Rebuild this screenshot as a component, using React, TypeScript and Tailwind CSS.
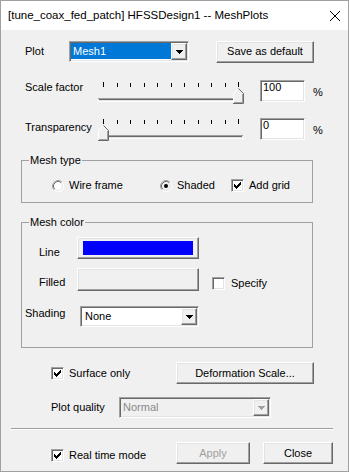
import React from "react";

const raised =
  "border border-t-white border-l-white border-r-[#696969] border-b-[#696969] shadow-[inset_-1px_-1px_0_#a0a0a0,inset_1px_1px_0_#e3e3e3]";
const sunken =
  "border border-t-[#a0a0a0] border-l-[#a0a0a0] border-r-white border-b-white shadow-[inset_1px_1px_0_#696969,inset_-1px_-1px_0_#e3e3e3]";

const Triangle = ({ color = "#000" }: { color?: string }) => (
  <svg width="7" height="4" viewBox="0 0 7 4">
    <path d="M0 0h7v1H0zM1 1h5v1H1zM2 2h3v1H2zM3 3h1v1H3z" fill={color} />
  </svg>
);

interface ComboProps {
  value: string;
  width: string;
  selected?: boolean;
  disabled?: boolean;
}

const Combo = ({ value, width, selected, disabled }: ComboProps) => (
  <div className={`${width} h-[21px] flex p-[1px] ${sunken} ${disabled ? "bg-[#f0f0f0]" : "bg-white"}`}>
    <div
      className={`flex-1 flex items-center leading-[13px] ${
        selected ? "bg-[#0078d7] text-white pl-[2px] mb-[1px]" : disabled ? "text-[#8a8a8a] pl-[2px]" : "pl-[3px]"
      }`}
    >
      {value}
    </div>
    <div className={`w-[16px] flex items-center justify-center bg-[#f0f0f0] ${raised}`}>
      <Triangle color={disabled ? "#a0a0a0" : "#000"} />
    </div>
  </div>
);

const Checkbox = ({ checked }: { checked?: boolean }) => (
  <div className={`w-[13px] h-[13px] shrink-0 bg-white flex items-center justify-center ${sunken}`}>
    {checked && (
      <svg width="7" height="7" viewBox="0 0 7 7">
        <path
          d="M6 0h1v1H6zM5 1h2v1H5zM0 2h1v1H0zM4 2h3v1H4zM0 3h2v1H0zM3 3h3v1H3zM0 4h5v1H0zM1 5h3v1H1zM2 6h1v1H2z"
          fill="#000"
        />
      </svg>
    )}
  </div>
);

const Radio = ({ checked }: { checked?: boolean }) => (
  <svg width="12" height="12" viewBox="0 0 12 12" className="shrink-0">
    <circle cx="6" cy="6" r="5.5" fill={checked ? "#f0f0f0" : "#fff"} />
    <path d="M2.11 9.89A5.5 5.5 0 0 1 9.89 2.11" stroke="#a0a0a0" fill="none" />
    <path d="M9.89 2.11A5.5 5.5 0 0 1 2.11 9.89" stroke="#fff" fill="none" />
    <path d="M2.82 9.18A4.5 4.5 0 0 1 9.18 2.82" stroke="#696969" fill="none" />
    <path d="M9.18 2.82A4.5 4.5 0 0 1 2.82 9.18" stroke="#e3e3e3" fill="none" />
    {checked && <circle cx="6" cy="6" r="2" fill="#000" />}
  </svg>
);

const Slider = ({ pos }: { pos: number }) => {
  const ticks = Array.from({ length: 11 }, (_, i) => Math.round(5 + i * 13.5) + 0.5);
  return (
    <svg width="146" height="23" viewBox="0 0 146 23" className="shrink-0">
      {ticks.map((x, i) => (
        <line key={i} x1={x} x2={x} y1={i === 0 || i === 10 ? 0 : 1} y2={5} stroke="#000" />
      ))}
      <line x1="0" y1="16.5" x2="145" y2="16.5" stroke="#a0a0a0" />
      <line x1="1" y1="17.5" x2="144" y2="17.5" stroke="#696969" />
      <line x1="1" y1="18.5" x2="145" y2="18.5" stroke="#e3e3e3" />
      <line x1="0" y1="19.5" x2="146" y2="19.5" stroke="#fff" />
      <g transform={`translate(${pos},6)`}>
        <polygon points="0,5 5,0 11,6 11,16 0,16" fill="#f0f0f0" />
        <polyline points="0.5,15 0.5,5.5 5.5,0.5" stroke="#fff" fill="none" />
        <polyline points="5.5,0.5 10.5,5.5 10.5,15.5 0,15.5" stroke="#696969" fill="none" />
        <polyline points="9.5,6 9.5,14.5 1,14.5" stroke="#a0a0a0" fill="none" />
      </g>
    </svg>
  );
};

const Button = ({ label, width, disabled }: { label: string; width: string; disabled?: boolean }) => (
  <div
    className={`${width} h-[22px] flex items-center justify-center bg-[#f0f0f0] ${raised} ${
      disabled ? "text-[#a0a0a0]" : ""
    }`}
  >
    {label}
  </div>
);

export default function App() {
  return (
    <div className="w-[349px] h-[472px] border border-[#a0a0a0] bg-[#f0f0f0] flex flex-col text-[11px] leading-[13px] text-black font-['Liberation_Sans',Arial,sans-serif]">
      {/* title bar */}
      <div className="h-[29px] bg-white flex items-center justify-between pl-[7px] pr-[8px] shrink-0">
        <span className="text-[11.5px]">[tune_coax_fed_patch] HFSSDesign1 -- MeshPlots</span>
        <svg width="10" height="10" viewBox="0 0 10 10">
          <path d="M0 0L10 10M10 0L0 10" stroke="#000" strokeWidth="1" />
        </svg>
      </div>

      {/* plot */}
      <div className="mt-[11px] flex items-center h-[21px]">
        <div className="ml-[24px] w-[44px]">Plot</div>
        <Combo value="Mesh1" width="w-[120px]" selected />
        <div className="ml-[27px]">
          <Button label="Save as default" width="w-[98px]" />
        </div>
      </div>

      {/* scale factor */}
      <div className="mt-[18px] flex items-start h-[23px]">
        <div className="ml-[24px] w-[73px] mt-[1px]">Scale factor</div>
        <div className="mt-[2px]">
          <Slider pos={135} />
        </div>
        <div className={`ml-[16px] w-[45px] h-[22px] bg-white p-[1px] pl-[2px] leading-[11px] ${sunken}`}>100</div>
        <div className="ml-[8px] mt-[6px]">%</div>
      </div>

      {/* transparency */}
      <div className="mt-[15px] flex items-start h-[23px]">
        <div className="ml-[24px] w-[73px] mt-[3px]">Transparency</div>
        <div className="mt-[1px]">
          <Slider pos={0} />
        </div>
        <div className={`ml-[16px] w-[45px] h-[22px] bg-white p-[1px] pl-[2px] leading-[11px] ${sunken}`}>0</div>
        <div className="ml-[8px] mt-[6px]">%</div>
      </div>

      {/* mesh type */}
      <fieldset className="mt-[13px] ml-[20px] w-[292px] h-[49px] border border-[#a0a0a0] shrink-0">
        <legend className="ml-[7px] px-[1px] leading-[13px]">Mesh type</legend>
        <div className="mt-[12px] flex items-center h-[13px]">
          <div className="ml-[30px] w-[108px] flex items-center">
            <Radio />
            <span className="ml-[5px]">Wire frame</span>
          </div>
          <div className="w-[71px] flex items-center">
            <Radio checked />
            <span className="ml-[5px]">Shaded</span>
          </div>
          <div className="flex items-center">
            <Checkbox checked />
            <span className="ml-[5px]">Add grid</span>
          </div>
        </div>
      </fieldset>

      {/* mesh color */}
      <fieldset className="mt-[13px] ml-[20px] w-[292px] h-[132px] border border-[#a0a0a0] shrink-0">
        <legend className="ml-[7px] px-[1px] leading-[13px]">Mesh color</legend>
        <div className="mt-[8px] flex items-start">
          <div className="ml-[17px] w-[38px] mt-[9px]">Line</div>
          <div className={`w-[122px] h-[22px] bg-[#f0f0f0] px-[5px] py-[3px] ${raised}`}>
            <div className="w-full h-full bg-[#0000ff]" />
          </div>
        </div>
        <div className="mt-[9px] flex items-start">
          <div className="ml-[17px] w-[38px] mt-[8px]">Filled</div>
          <div className={`w-[122px] h-[23px] bg-[#f0f0f0] ${raised}`} />
          <div className="ml-[13px] mt-[9px] flex items-center">
            <Checkbox />
            <span className="ml-[6px]">Specify</span>
          </div>
        </div>
        <div className="mt-[15px] flex items-start">
          <div className="ml-[3px] w-[55px] mt-[1px]">Shading</div>
          <Combo value="None" width="w-[119px]" />
        </div>
      </fieldset>

      {/* surface only */}
      <div className="mt-[14px] flex items-center h-[22px]">
        <div className="ml-[50px] w-[125px] flex items-center">
          <Checkbox checked />
          <span className="ml-[5px]">Surface only</span>
        </div>
        <Button label="Deformation Scale..." width="w-[138px]" />
      </div>

      {/* plot quality */}
      <div className="mt-[13px] flex items-center h-[21px]">
        <div className="ml-[50px] w-[68px]">Plot quality</div>
        <Combo value="Normal" width="w-[152px]" disabled />
      </div>

      <div className="mt-[10px] ml-[10px] w-[322px] h-[2px] border-t border-t-[#a0a0a0] border-b border-b-white shrink-0" />

      {/* bottom buttons */}
      <div className="mt-[12px] flex items-start h-[22px]">
        <div className="ml-[50px] w-[125px] mt-[7px] flex items-center">
          <Checkbox checked />
          <span className="ml-[5px]">Real time mode</span>
        </div>
        <Button label="Apply" width="w-[74px]" disabled />
        <div className="ml-[13px]">
          <Button label="Close" width="w-[70px]" />
        </div>
      </div>
    </div>
  );
}
